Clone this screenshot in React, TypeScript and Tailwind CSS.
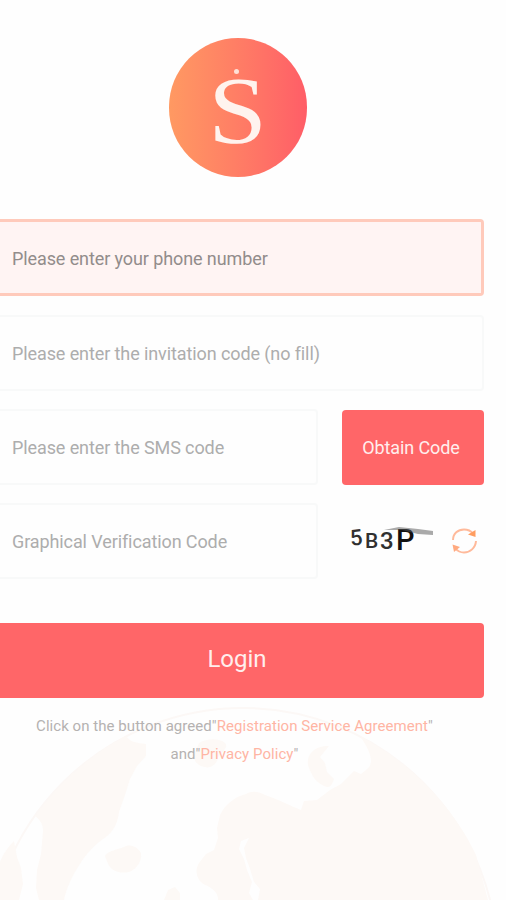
import type { ReactNode } from "react";

function Globe() {
  return (
    <svg
      className="absolute bottom-0 left-0 -z-10 h-[210px] w-full"
      viewBox="0 0 506 210"
      aria-hidden
    >
      <circle cx="243" cy="273" r="255" fill="none" stroke="#fcf8f6" strokeWidth="2" />
      <g fill="#fdf9f6">
        <path d="M146 54 C137 53 130 52 126 46 C87 66 56 96 35 126 C39 129 43 133 43 141 L41 164 L37 180 L36 198 L39 210 H64 C66 199 73 184 80 174 C86 164 95 154 106 147 C114 141 118 132 119 122 L125 105 L130 89 L137 76 L146 66 Z" />
        <path d="M14 151 C7 158 2 166 0 172 V210 H19 L23 194 L21 178 L17 167 Z" />
        <path d="M105 166 C109 160 117 160 124 157 C132 153 138 158 141 163 C142 171 137 179 129 182 C119 184 112 181 108 174 Z" />
        <path d="M199 53 C207 48 220 48 225 53 C229 57 222 62 218 67 C218 73 211 79 205 77 C196 76 192 68 195 62 Z" />
        <path d="M329 56 C317 55 306 63 308 75 C311 84 315 92 324 96 C331 99 332 94 334 89 L327 82 L325 73 L320 67 Z" />
        <path d="M360 46 C415 76 455 120 476 165 L488 210 H258 L260 199 L254 192 L250 179 L246 168 L244 158 L249 148 L241 151 L239 159 L244 169 L247 180 L252 192 L249 203 L253 210 H218 C219 203 211 197 205 195 C197 191 194 181 199 173 L206 164 L214 160 L218 148 L217 138 L220 125 C226 112 238 106 246 104 C252 100 260 102 265 105 C278 109 290 116 301 120 L304 111 L317 110 L330 100 L341 94 L347 88 L354 81 L361 84 L366 80 C375 74 371 62 360 46 Z" />
        <path d="M164 210 L168 200 L175 197 L180 203 V210 Z" />
      </g>
    </svg>
  );
}

function RefreshIcon() {
  return (
    <svg className="h-7 w-7" viewBox="0 0 28 28" fill="none" aria-hidden>
      <path
        d="M3 13 C3 6.500 8 2.500 14 2.500 C18 2.500 21 4 23 6.500 M26 14 C25.500 21 20 25.500 14 25.500 C10.500 25.500 7.500 24 5.500 21.500"
        stroke="#ffba9b"
        strokeWidth="2"
      />
      <path d="M18 7.500 L25.500 3 L25.500 10 Z" fill="#ff9d60" />
      <path d="M2.500 17.500 L10 20 L4 25 Z" fill="#ffaa80" />
    </svg>
  );
}

function Captcha() {
  return (
    <div className="relative flex h-[34px] w-[92px] items-start pl-2 font-['Roboto',sans-serif] leading-none tracking-normal text-[#303030]">
      <span className="mt-[3px] w-[15px] -rotate-6 text-[22px] font-medium">5</span>
      <span className="mt-[7px] w-[15px] text-[21px] font-medium">B</span>
      <span className="mt-[5px] w-[16px] text-[24px] font-medium">3</span>
      <span className="mt-[2px] text-[29px] font-medium text-[#111]">P</span>
      <svg className="absolute top-0 left-0 h-[34px] w-[92px]" viewBox="0 0 92 34" aria-hidden>
        <path d="M42 6 L57 3 L76 5 L91 7 V11 L76 10 L60 6 Z" fill="#555" opacity="0.5" />
      </svg>
    </div>
  );
}

function Field({ children }: { children: ReactNode }) {
  return (
    <div className="flex h-[76px] flex-1 items-center rounded-r border-2 border-l-0 border-[#f8f9f9] pt-px pl-3 text-[#adadad]">
      {children}
    </div>
  );
}

export default function App() {
  return (
    <main className="relative isolate h-[900px] w-full overflow-hidden bg-[#fefefe] font-['Roboto',sans-serif] text-[18px] leading-6 tracking-[-0.1px] whitespace-nowrap">
      <Globe />
      <div className="flex w-[484px] flex-col pt-[38px]">
        <div className="relative ml-[169px] flex h-[139px] w-[138px] items-center justify-center rounded-full bg-linear-to-r from-[#ff9962] to-[#ff5d67]">
          <span className="absolute top-[31px] left-[65px] size-[5px] rounded-full bg-[#ffe0d6]" />
          <span className="scale-x-110 pt-[6px] font-['Liberation_Serif',serif] text-[96px] leading-none tracking-normal text-[#fff3ee]">
            S
          </span>
        </div>

        <div className="mt-[42px] flex h-[77px] items-center rounded-r border-[3px] border-l-0 border-[#ffcabb] bg-[#fff4f3] pt-[2px] pl-3 text-[#928c8b]">
          <span>Please enter your phone number</span>
        </div>

        <div className="mt-[19px] flex">
          <Field>
            <span>Please enter the invitation code (no fill)</span>
          </Field>
        </div>

        <div className="mt-[18px] flex gap-6">
          <Field>
            <span>Please enter the SMS code</span>
          </Field>
          <button className="mt-px h-[75px] w-[142px] rounded bg-[#ff6668] pr-1 text-[#ffeeed]">
            <span>Obtain Code</span>
          </button>
        </div>

        <div className="mt-[18px] flex items-center">
          <div className="flex w-[318px]">
            <Field>
              <span>Graphical Verification Code</span>
            </Field>
          </div>
          <div className="ml-[24px]">
            <Captcha />
          </div>
          <div className="ml-[16px]">
            <RefreshIcon />
          </div>
        </div>

        <button className="mt-[44px] h-[75px] rounded-r bg-[#ff6668] pr-[10px] pb-[3px] text-[24px] tracking-normal text-[#ffeeed]">
          <span>Login</span>
        </button>

        <p className="mt-[14px] pr-[15px] text-center text-[15px] leading-[28px] tracking-[0.05px] text-[#b5b2b1]">
          <span>Click on the button agreed"</span>
          <span className="text-[#ffb5a4]">Registration Service Agreement</span>
          <span>"</span>
          <br />
          <span>and"</span>
          <span className="text-[#ffb5a4]">Privacy Policy</span>
          <span>"</span>
        </p>
      </div>
    </main>
  );
}
